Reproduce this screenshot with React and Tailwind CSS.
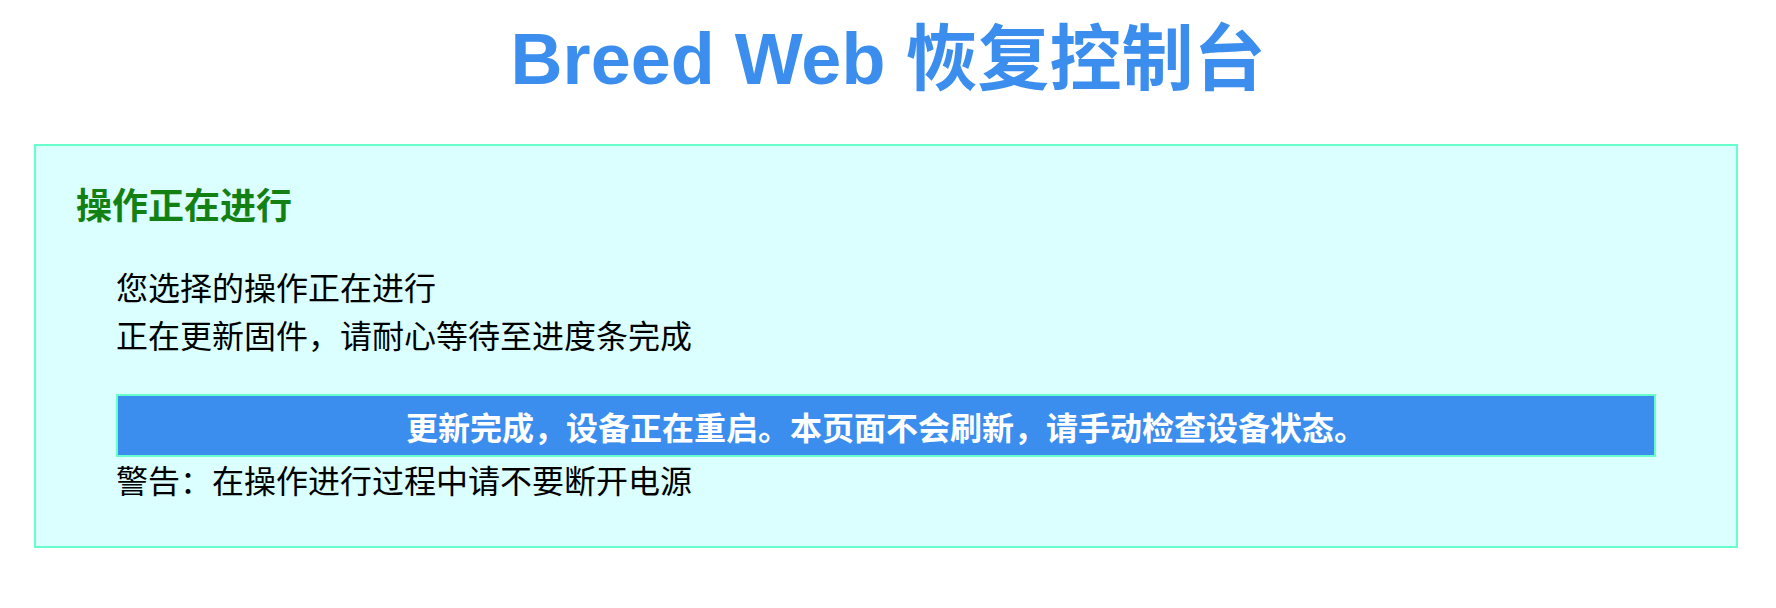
export default function App() {
  const cjk = { fontFamily: '"Noto Sans CJK SC", "Liberation Sans", sans-serif' };
  return (
    <div className="w-[1776px] h-[608px] bg-white overflow-hidden" style={cjk}>
      <h1
        className="mt-[19px] text-center text-[72px] leading-[80px] font-bold text-[#3b8eed]"
        style={{ fontFamily: '"Liberation Sans", "Noto Sans CJK SC", sans-serif' }}
      >
        Breed Web 恢复控制台
      </h1>
      <div className="mt-[45px] ml-[34px] w-[1704px] h-[404px] border-2 border-[#66ffcc] bg-[#dafffe] pt-[35px] px-[40px]">
        <h3 className="text-[36px] leading-[44px] font-bold text-[#138013]">操作正在进行</h3>
        <div className="mx-[40px] mt-[37px] text-black text-[32px]">
          <p className="leading-[48px]">您选择的操作正在进行</p>
          <p className="leading-[48px]">正在更新固件，请耐心等待至进度条完成</p>
          <div className="mt-[36px] h-[63px] border-2 border-[#66ffcc] bg-[#3b8eed] flex items-center justify-center text-white font-bold text-[32px] leading-[40px]">
            更新完成，设备正在重启。本页面不会刷新，请手动检查设备状态。
          </div>
          <p className="leading-[44px]">警告：在操作进行过程中请不要断开电源</p>
        </div>
      </div>
    </div>
  );
}
